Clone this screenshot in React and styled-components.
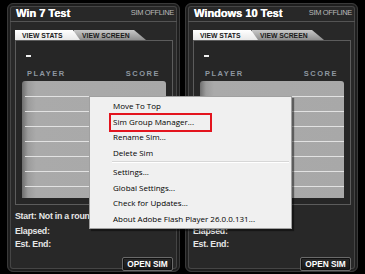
import React from 'react';
import styled, { createGlobalStyle } from 'styled-components';

const GlobalStyle = createGlobalStyle`
  html, body {
    margin: 0;
    padding: 0;
    background: #000;
  }
  * {
    box-sizing: border-box;
  }
`

const Page = styled.div`
  position: relative;
  width: 365px;
  height: 274px;
  display: flex;
  gap: 5px;
  padding: 3px 7px 2px 7px;
  background: #000;
  font-family: "Liberation Sans", Arial, sans-serif;
  overflow: hidden;
`

const Panel = styled.div`
  width: 174px;
  height: 269px;
  display: flex;
  flex-direction: column;
  border: 1px solid #3a3a3a;
  border-radius: 6px;
  background: #282828;
  box-shadow: inset 0 0 0 2px #1e1e1e, inset 0 0 0 3px #454545;
`

const Header = styled.div`
  height: 20px;
  display: flex;
  align-items: center;
  justify-content: space-between;
  padding: 0 3px 0 6px;
  margin: 0 2px;
  border-bottom: 1px solid #545454;
`

const Title = styled.span`
  color: #fff;
  font-weight: bold;
  font-size: 11px;
  text-shadow: 0.3px 0 0 #fff;
`

const Status = styled.span`
  color: #b8b8b8;
  font-size: 7.5px;
  letter-spacing: -0.35px;
`

const Body = styled.div`
  padding: 8px 6px 0 7px;
  display: flex;
  flex-direction: column;
`

const TabRow = styled.div`
  display: flex;
  height: 10px;
`

const Tab = styled.div`
  position: relative;
  height: 10px;
  width: ${props => props.width}px;
  margin-left: ${props => props.overlap ? -6 : 0}px;
  z-index: ${props => props.active ? 2 : 1};
  padding-left: ${props => props.active ? 7 : 8}px;
  display: flex;
  align-items: center;
  font-size: 6.8px;
  font-weight: bold;
  color: #1a1a1a;
  background: ${props => props.active
    ? 'linear-gradient(#ffffff, #e8e8e8)'
    : 'linear-gradient(#c8c8c8, #8e8e8e)'};
  clip-path: polygon(0 0, calc(100% - ${props => props.slant}px) 0, 100% 100%, 0 100%);
`

const StatsBox = styled.div`
  height: 165px;
  border: 1px solid #5c5c5c;
  background: #262626;
  padding: 0 6px 6px 6px;
  display: flex;
  flex-direction: column;
`

const Dash = styled.div`
  width: 5px;
  height: 2px;
  background: #f0f0f0;
  margin: 14px 0 0 4px;
`

const Labels = styled.div`
  display: flex;
  justify-content: space-between;
  padding: 0 6px 0 5px;
  margin-top: 10px;
  height: 12px;
  align-items: center;
  font-size: 7.5px;
  font-weight: bold;
  letter-spacing: 1.5px;
  color: #8e96a0;
`

const Table = styled.div`
  flex: 1;
  margin-top: 2px;
  border-radius: 3px 3px 0 0;
  background: linear-gradient(90deg, #6e6e6e 0, #9c9c9c 6px, #aaaaaa 14px, #a8a8a8 100%);
  padding-top: 1px;
  overflow: hidden;
`

const Row = styled.div`
  height: 15px;
  border-bottom: ${props => props.last ? 'none' : '1px solid #e2e2e2'};
  margin-left: 3px;
`

const Info = styled.div`
  margin-top: 3px;
  display: flex;
  flex-direction: column;
`

const InfoLine = styled.div`
  height: ${props => props.h}px;
  line-height: ${props => props.h}px;
  font-size: 8.8px;
  font-weight: bold;
  color: #e6e6e6;
  white-space: nowrap;
  letter-spacing: -0.25px;
`

const ButtonRow = styled.div`
  display: flex;
  justify-content: flex-end;
  margin-top: 7px;
`

const OpenButton = styled.div`
  width: 51px;
  height: 14px;
  border: 1px solid #6a6a6a;
  border-radius: 2px;
  background: linear-gradient(#2a2a2a, #161616);
  box-shadow: inset 0 0 0 1px #111;
  color: #fff;
  font-size: 8.3px;
  font-weight: bold;
  display: flex;
  align-items: center;
  justify-content: center;
`

const Menu = styled.div`
  position: absolute;
  left: 89px;
  top: 96px;
  width: 203px;
  height: 133px;
  background: #f0f0f0;
  border: 1px solid #a0a0a0;
  box-shadow: 2px 2px 1px rgba(0, 0, 0, 0.45);
  padding-top: 1px;
  font-family: "Open Sans", "Liberation Sans", sans-serif;
  z-index: 10;
`

const MenuItem = styled.div`
  position: relative;
  height: 15.5px;
  line-height: 15.5px;
  padding-left: 23px;
  font-size: 8px;
  color: #000;
  white-space: nowrap;
`

const Highlight = styled.div`
  position: absolute;
  left: 19px;
  top: -0.5px;
  width: 103px;
  height: 19px;
  border: 2.5px solid #e3141e;
`

const Separator = styled.div`
  height: 1px;
  margin: 1px 2px 1px 22px;
  background: #d7d7d7;
  border-bottom: 1px solid #fff;
  box-sizing: content-box;
`

const SimPanel = ({ title }) => (
  <Panel>
    <Header>
      <Title>{title}</Title>
      <Status>SIM OFFLINE</Status>
    </Header>
    <Body>
      <TabRow>
        <Tab active width={65} slant={7}>VIEW STATS</Tab>
        <Tab overlap width={72} slant={12}>VIEW SCREEN</Tab>
      </TabRow>
      <StatsBox>
        <Dash />
        <Labels>
          <span>PLAYER</span>
          <span>SCORE</span>
        </Labels>
        <Table>
          {[0, 1, 2, 3, 4, 5, 6, 7].map(i => <Row key={i} last={i === 7} />)}
        </Table>
      </StatsBox>
      <Info>
        <InfoLine h={16}>Start: Not in a round</InfoLine>
        <InfoLine h={14}>Elapsed:</InfoLine>
        <InfoLine h={12}>Est. End:</InfoLine>
      </Info>
      <ButtonRow>
        <OpenButton>OPEN SIM</OpenButton>
      </ButtonRow>
    </Body>
  </Panel>
)

const App = () => (
  <Page>
    <GlobalStyle />
    <SimPanel title="Win 7 Test" />
    <SimPanel title="Windows 10 Test" />
    <Menu>
      <MenuItem>Move To Top</MenuItem>
      <MenuItem>
        <Highlight />
        Sim Group Manager...
      </MenuItem>
      <MenuItem>Rename Sim...</MenuItem>
      <MenuItem>Delete Sim</MenuItem>
      <Separator />
      <MenuItem>Settings...</MenuItem>
      <MenuItem>Global Settings...</MenuItem>
      <MenuItem>Check for Updates...</MenuItem>
      <MenuItem>About Adobe Flash Player 26.0.0.131...</MenuItem>
    </Menu>
  </Page>
)

export default App;
